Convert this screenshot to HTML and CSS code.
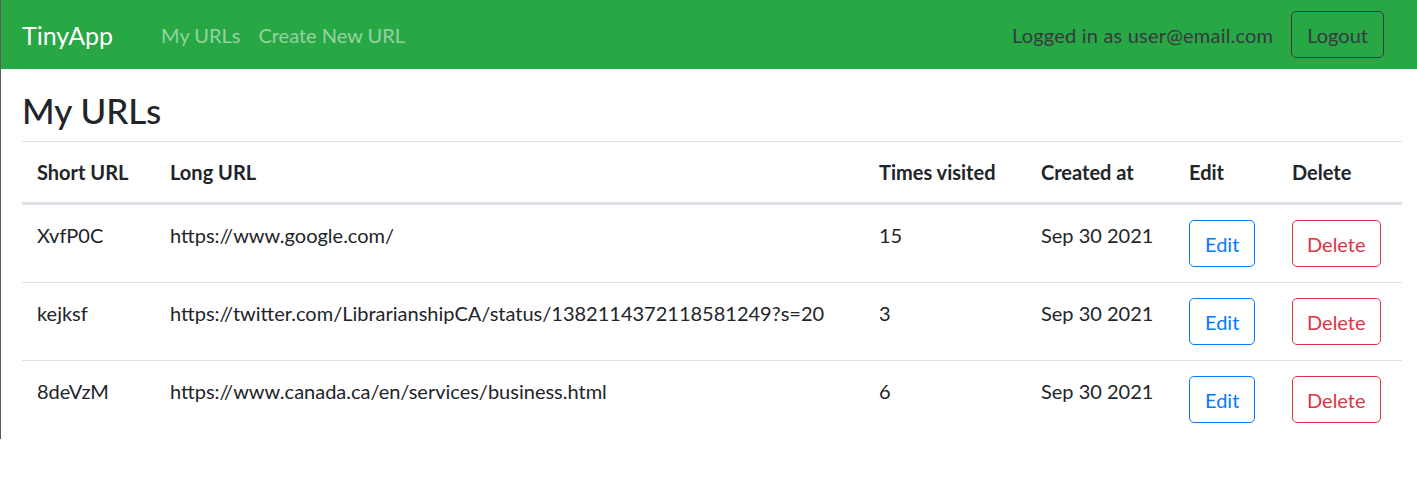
FILE: index.html
```html
<!DOCTYPE html>
<html lang="en">
<head>
<meta charset="utf-8">
<title>TinyApp</title>
<link rel="stylesheet" href="styles.css">
</head>
<body>
<div class="frame">
  <nav class="navbar">
    <a class="brand" href="#">TinyApp</a>
    <div class="nav-links">
      <a class="nav-link" href="#">My URLs</a>
      <a class="nav-link" href="#">Create New URL</a>
    </div>
    <div class="nav-right">
      <span class="nav-text">Logged in as user@email.com</span>
      <button class="btn btn-dark-outline">Logout</button>
    </div>
  </nav>
  <main class="content">
    <h3 class="title">My URLs</h3>
    <table class="urls">
      <colgroup>
        <col class="c-short"><col class="c-long"><col class="c-visits"><col class="c-created"><col class="c-edit"><col class="c-delete">
      </colgroup>
      <thead>
        <tr><th>Short URL</th><th>Long URL</th><th>Times visited</th><th>Created at</th><th>Edit</th><th>Delete</th></tr>
      </thead>
      <tbody>
        <tr>
          <td>XvfP0C</td><td>https://www.google.com/</td><td>15</td><td>Sep 30 2021</td>
          <td><button class="btn btn-blue">Edit</button></td><td><button class="btn btn-red">Delete</button></td>
        </tr>
        <tr>
          <td>kejksf</td><td>https://twitter.com/LibrarianshipCA/status/1382114372118581249?s=20</td><td>3</td><td>Sep 30 2021</td>
          <td><button class="btn btn-blue">Edit</button></td><td><button class="btn btn-red">Delete</button></td>
        </tr>
        <tr>
          <td>8deVzM</td><td>https://www.canada.ca/en/services/business.html</td><td>6</td><td>Sep 30 2021</td>
          <td><button class="btn btn-blue">Edit</button></td><td><button class="btn btn-red">Delete</button></td>
        </tr>
      </tbody>
    </table>
  </main>
</div>
</body>
</html>
```

FILE: styles.css
```css
* { box-sizing: border-box; }
html, body { margin: 0; padding: 0; background: #fff; }
body {
  font-family: "Lato", "Noto Sans", "Liberation Sans", sans-serif;
  font-size: 20px;
  line-height: 30px;
  color: #212529;
}
.frame {
  border-left: 1px solid #5a5a5a;
  height: 439px;
}
.navbar {
  display: flex;
  align-items: center;
  height: 69px;
  background: #28a745;
  padding: 0 33px 0 21px;
}
.brand {
  color: #fff;
  text-decoration: none;
  font-size: 25px;
  line-height: 36px;
  margin-right: 48px;
}
.nav-links { display: flex; gap: 18px; }
.nav-link {
  color: rgba(255,255,255,0.5);
  text-decoration: none;
  font-size: 20px;
}
.nav-right {
  margin-left: auto;
  display: flex;
  align-items: center;
  gap: 18px;
}
.nav-text { color: #343a40; letter-spacing: 0.2px; }
.btn {
  font-family: inherit;
  font-size: 20px;
  line-height: 30px;
  padding: 7.5px 15px;
  border-radius: 5px;
  background: transparent;
  border: 1px solid;
  cursor: pointer;
}
.btn-dark-outline { color: #343a40; border-color: #343a40; }
.btn-blue { color: #007bff; border-color: #007bff; }
.btn-red { color: #dc3545; border-color: #dc3545; padding: 7.5px 14px; }
.content { padding: 20px 15px 0 21px; }
.title {
  font-size: 35px;
  line-height: 42px;
  font-weight: 500;
  margin: 0 0 10px;
}
.urls {
  width: 100%;
  table-layout: fixed;
  border-collapse: collapse;
}
.c-short { width: 133px; }
.c-long { width: 709px; }
.c-visits { width: 162px; }
.c-created { width: 148px; }
.c-edit { width: 103px; }
.c-delete { width: 125px; }
.urls th, .urls td {
  padding: 15px 15px;
  text-align: left;
  vertical-align: top;
  border-top: 1px solid #dee2e6;
  white-space: nowrap;
}
.urls th { font-weight: 700; vertical-align: bottom; border-bottom: 3px solid #dee2e6; }
```
